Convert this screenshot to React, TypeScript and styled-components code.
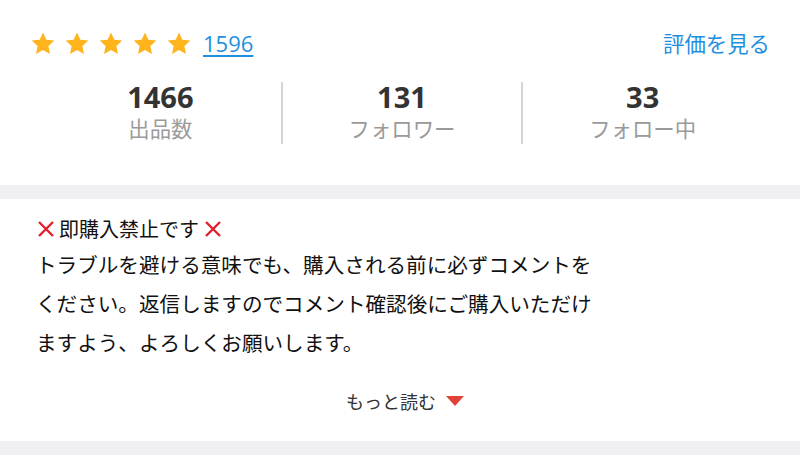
import { createGlobalStyle, styled } from "styled-components";

const GlobalStyle = createGlobalStyle`
  html, body {
    margin: 0;
    padding: 0;
    background: #ffffff;
  }
  body {
    font-family: "Noto Sans CJK JP", "Noto Sans", sans-serif;
    color: #222;
  }
`;

const stats = [
  { value: "1466", label: "出品数" },
  { value: "131", label: "フォロワー" },
  { value: "33", label: "フォロー中" },
];

const lines = [
  "トラブルを避ける意味でも、購入される前に必ずコメントを",
  "ください。返信しますのでコメント確認後にご購入いただけ",
  "ますよう、よろしくお願いします。",
];

function Star() {
  return (
    <svg width="24" height="23" viewBox="0 0 24 23">
      <path
        d="M12 0.5l3.4 7.2 7.9 0.9-5.9 5.4 1.6 7.9L12 18 5 21.9l1.6-7.9L0.7 8.6l7.9-0.9z"
        fill="#ffb41e"
      />
    </svg>
  );
}

function Cross() {
  return (
    <svg width="18" height="18" viewBox="0 0 18 18">
      <path d="M2 2L16 16M16 2L2 16" stroke="#e0202e" strokeWidth="2.4" />
    </svg>
  );
}

export default function App() {
  return (
    <Page>
      <GlobalStyle />
      <Profile>
        <RatingRow>
          <Stars>
            {[0, 1, 2, 3, 4].map((i) => (
              <Star key={i} />
            ))}
            <Count href="#">1596</Count>
          </Stars>
          <ReviewLink href="#">評価を見る</ReviewLink>
        </RatingRow>
        <StatsRow>
          {stats.map((s) => (
            <Stat key={s.label}>
              <StatValue>{s.value}</StatValue>
              <StatLabel>{s.label}</StatLabel>
            </Stat>
          ))}
        </StatsRow>
      </Profile>
      <Separator />
      <Description>
        <Headline>
          <Cross />
          <span>即購入禁止です</span>
          <Cross />
        </Headline>
        <Body>
          {lines.map((l) => (
            <Line key={l}>{l}</Line>
          ))}
        </Body>
        <MoreButton>
          もっと読む
          <Triangle />
        </MoreButton>
      </Description>
      <Separator />
    </Page>
  );
}

const Page = styled.div`
  width: 800px;
  height: 455px;
  overflow: hidden;
  background: #fff;
`;

const Profile = styled.section`
  height: 185px;
  padding: 29px 30px 0 31px;
  box-sizing: border-box;
`;

const RatingRow = styled.div`
  display: flex;
  align-items: center;
  justify-content: space-between;
  height: 28px;
`;

const Stars = styled.div`
  display: flex;
  align-items: center;
  gap: 10px;

  svg {
    display: block;
  }
`;

const Count = styled.a`
  margin-left: 2px;
  font-family: "Open Sans", "Noto Sans", sans-serif;
  font-size: 22px;
  color: #1f8fe0;
  text-decoration: underline;
  text-underline-offset: 3px;
  text-decoration-thickness: 1.5px;
  line-height: 28px;
`;

const ReviewLink = styled.a`
  font-size: 21.4px;
  color: #1f8fe0;
  text-decoration: none;
  line-height: 28px;
`;

const StatsRow = styled.div`
  display: grid;
  grid-template-columns: repeat(3, 1fr);
  margin: 25px 8px 0 9px;
`;

const Stat = styled.div`
  display: flex;
  flex-direction: column;
  align-items: center;
  height: 62px;
  border-left: 2px solid #d4d4d4;

  &:first-child {
    border-left: none;
  }
`;

const StatValue = styled.div`
  font-family: "Open Sans", "Noto Sans", sans-serif;
  font-size: 29px;
  font-weight: 700;
  color: #333;
  line-height: 30px;
`;

const StatLabel = styled.div`
  font-size: 21.4px;
  color: #9a9a9a;
  line-height: 28px;
  margin-top: 2px;
`;

const Separator = styled.div`
  height: 14px;
  background: #efeff4;
`;

const Description = styled.section`
  height: 242px;
  padding: 16px 36px 0 36px;
  box-sizing: border-box;
  display: flex;
  flex-direction: column;
`;

const Headline = styled.div`
  display: flex;
  align-items: center;
  gap: 4px;
  font-size: 20px;
  line-height: 28px;
  color: #111;

  svg {
    display: block;
    margin-left: 1px;
  }
`;

const Body = styled.div`
  margin-top: 2px;
`;

const Line = styled.div`
  font-size: 20.6px;
  line-height: 39px;
  color: #111;
  white-space: nowrap;
`;

const MoreButton = styled.div`
  margin-top: 27px;
  align-self: center;
  display: flex;
  align-items: center;
  gap: 10px;
  font-size: 18px;
  color: #333;
  line-height: 24px;
  padding-left: 10px;
`;

const Triangle = styled.span`
  width: 0;
  height: 0;
  border-left: 9px solid transparent;
  border-right: 9px solid transparent;
  border-top: 10px solid #e0433a;
`;
